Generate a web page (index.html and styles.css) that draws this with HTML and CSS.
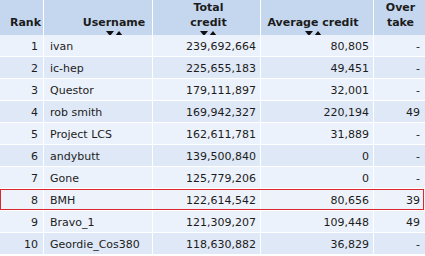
FILE: index.html
```html
<!DOCTYPE html>
<html>
<head>
<meta charset="utf-8">
<link rel="stylesheet" href="styles.css">
</head>
<body>
<div class="table">
  <div class="row head">
    <div class="th c1"><span class="lbl">Rank</span><span class="sort"></span></div>
    <div class="th c2"><span class="lbl">Username</span><span class="sort"><i class="dn"></i><i class="up"></i></span></div>
    <div class="th c3"><span class="lbl">Total<br>credit</span><span class="sort"><i class="dn"></i><i class="up"></i></span></div>
    <div class="th c4"><span class="lbl">Average credit</span><span class="sort"><i class="dn"></i><i class="up"></i></span></div>
    <div class="th c5"><span class="lbl">Over<br>take</span><span class="sort"></span></div>
  </div>
  <div class="row odd"><div class="td r">1</div><div class="td l">ivan</div><div class="td r">239,692,664</div><div class="td r">80,805</div><div class="td r">-</div></div>
  <div class="row even"><div class="td r">2</div><div class="td l">ic-hep</div><div class="td r">225,655,183</div><div class="td r">49,451</div><div class="td r">-</div></div>
  <div class="row odd"><div class="td r">3</div><div class="td l">Questor</div><div class="td r">179,111,897</div><div class="td r">32,001</div><div class="td r">-</div></div>
  <div class="row even"><div class="td r">4</div><div class="td l">rob smith</div><div class="td r">169,942,327</div><div class="td r">220,194</div><div class="td r">49</div></div>
  <div class="row odd"><div class="td r">5</div><div class="td l">Project LCS</div><div class="td r">162,611,781</div><div class="td r">31,889</div><div class="td r">-</div></div>
  <div class="row even"><div class="td r">6</div><div class="td l">andybutt</div><div class="td r">139,500,840</div><div class="td r">0</div><div class="td r">-</div></div>
  <div class="row odd"><div class="td r">7</div><div class="td l">Gone</div><div class="td r">125,779,206</div><div class="td r">0</div><div class="td r">-</div></div>
  <div class="row me"><div class="td r">8</div><div class="td l">BMH</div><div class="td r">122,614,542</div><div class="td r">80,656</div><div class="td r">39</div></div>
  <div class="row odd"><div class="td r">9</div><div class="td l">Bravo_1</div><div class="td r">121,309,207</div><div class="td r">109,448</div><div class="td r">49</div></div>
  <div class="row even"><div class="td r">10</div><div class="td l">Geordie_Cos380</div><div class="td r">118,630,882</div><div class="td r">36,829</div><div class="td r">-</div></div>
</div>
</body>
</html>
```
FILE: styles.css
```css
html, body {
  margin: 0;
  padding: 0;
  background: #ffffff;
}
body {
  font-family: "DejaVu Sans", Verdana, sans-serif;
  font-size: 11px;
  color: #1c1c1c;
}
.table {
  width: 424px;
  display: flex;
  flex-direction: column;
  gap: 1px;
}
.row {
  display: grid;
  grid-template-columns: 43px 108px 107px 112px 51px;
  column-gap: 1px;
  height: 21px;
}
.row.head {
  height: 34px;
}
.th {
  background: #c5d7ef;
  font-weight: bold;
  display: flex;
  flex-direction: column;
  align-items: center;
  justify-content: flex-end;
  line-height: 15px;
  text-align: center;
}
.th .lbl {
  display: block;
}
.sort {
  display: flex;
  gap: 1px;
  height: 7px;
  align-items: center;
}
.sort i {
  display: block;
  width: 0;
  height: 0;
  border-left: 4px solid transparent;
  border-right: 4px solid transparent;
}
.sort .dn {
  border-top: 5px solid #111;
}
.sort .up {
  border-bottom: 5px solid #111;
}
.c1 { padding-left: 8px; }
.c2 { padding-left: 32px; }
.c3 { padding-left: 4px; }
.c4 { padding-right: 8px; }
.c5 { padding-left: 2px; }
.td {
  line-height: 23px;
  white-space: nowrap;
  overflow: hidden;
}
.odd .td { background: #ecf2fb; }
.even .td { background: #dfe8f6; }
.me .td { background: #eef3fb; }
.me {
  outline: 1px solid #d9292f;
  outline-offset: -1px;
}
.td.r { text-align: right; padding-right: 4px; }
.td.l { text-align: left; padding-left: 6px; }
.row .td:first-child.r { padding-right: 5px; }
.row .td:last-child.r { padding-right: 5px; }
```
